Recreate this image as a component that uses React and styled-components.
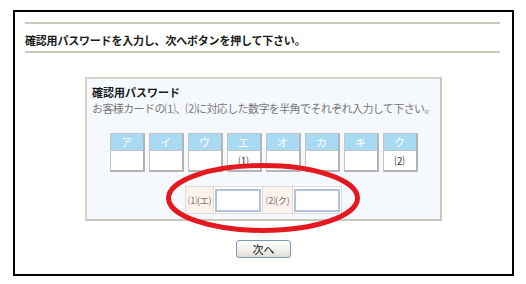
import React from "react";
import styled, { createGlobalStyle } from "styled-components";

const Global = createGlobalStyle`
  html, body { margin: 0; padding: 0; background: #fff; }
  body { font-family: "Noto Sans CJK JP", "Noto Sans", sans-serif; }
  * { box-sizing: border-box; }
`;

const Frame = styled.div`
  margin: 10px 0 0 13px;
  width: 501px;
  height: 266px;
  border: 2px solid #000;
  display: flex;
  flex-direction: column;
`;

const Header = styled.div`
  margin: 10px 12px 0 10px;
  border-top: 2px solid #cdc9bc;
  border-bottom: 2px solid #cdc9bc;
  padding: 9px 0 4px 0;
  font-size: 11px;
  line-height: 14px;
  font-weight: bold;
  color: #1a1a1a;
  letter-spacing: -0.2px;
  height: 31px;
`;

const Box = styled.div`
  margin: 24px auto 0 auto;
  width: 357px;
  border: 2px solid #d6d3ca;
  border-right-color: #c9c6bc;
  border-bottom-color: #c9c6bc;
  background: #f5f9fd;
  padding: 5px 5px 5px 5px;
  display: flex;
  flex-direction: column;
`;

const BoxTitle = styled.div`
  font-size: 11px;
  line-height: 16px;
  font-weight: bold;
  color: #1a1a1a;
`;

const BoxNote = styled.div`
  margin-top: 1px;
  font-size: 11px;
  line-height: 14px;
  color: #777;
  letter-spacing: -0.6px;
  white-space: nowrap;
`;

const Cards = styled.div`
  margin-top: 18px;
  display: grid;
  grid-template-columns: repeat(8, 35px);
  column-gap: 4px;
  justify-content: center;
`;

const Cell = styled.div`
  width: 35px;
  border-top: 1px solid #c4c4c4;
  border-left: 1px solid #c4c4c4;
  border-right: 2px solid #b4b4b4;
  border-bottom: 2px solid #b4b4b4;
  display: flex;
  flex-direction: column;
`;

const CellHead = styled.div`
  height: 17px;
  background: #a8daf4;
  color: #fff;
  font-size: 11px;
  line-height: 17px;
  text-align: center;
  border-bottom: 1px solid #c4c4c4;
`;

const CellBody = styled.div`
  height: 19px;
  background: #fff;
  color: #333;
  font-size: 10px;
  line-height: 20px;
  text-align: center;
`;

const RowWrap = styled.div`
  margin: 14px auto 0 auto;
  position: relative;
`;

const InputRow = styled.div`
  display: flex;
  height: 28px;
  border: 1px solid #dcdcdc;
  background: #fff;
`;

const Label = styled.div`
  width: ${(p) => p.$w}px;
  background: #fdf2ec;
  color: #777;
  font-size: 9.5px;
  letter-spacing: -0.6px;
  display: flex;
  align-items: center;
  justify-content: center;
  border-right: 1px solid #dcdcdc;
  white-space: nowrap;
`;

const InputCell = styled.div`
  width: ${(p) => p.$w}px;
  display: flex;
  align-items: center;
  justify-content: center;
  border-right: ${(p) => (p.$last ? "none" : "1px solid #dcdcdc")};
`;

const Field = styled.input`
  width: 46px;
  height: 23px;
  border: 2px solid #b2c3d9;
  background: #fff;
  padding: 0;
  outline: none;
`;

const Ring = styled.svg`
  position: absolute;
  left: -19px;
  top: -23px;
  width: 194px;
  height: 70px;
  pointer-events: none;
  overflow: visible;
`;

const Button = styled.button`
  margin: 19px auto 0 auto;
  width: 55px;
  height: 18px;
  border: 1px solid #7e9cb9;
  border-radius: 3px;
  background: linear-gradient(#ffffff, #f0efea 60%, #dedcd3);
  font-family: "Noto Sans CJK JP", sans-serif;
  font-size: 11px;
  line-height: 14px;
  color: #111;
  padding: 0;
`;

const kana = ["ア", "イ", "ウ", "エ", "オ", "カ", "キ", "ク"];
const marks = { エ: "⑴", ク: "⑵" };

export default function App() {
  return (
    <>
      <Global />
      <Frame>
        <Header>確認用パスワードを入力し、次へボタンを押して下さい。</Header>
        <Box>
          <BoxTitle>確認用パスワード</BoxTitle>
          <BoxNote>お客様カードの⑴、⑵に対応した数字を半角でそれぞれ入力して下さい。</BoxNote>
          <Cards>
            {kana.map((k) => (
              <Cell key={k}>
                <CellHead>{k}</CellHead>
                <CellBody>{marks[k] || ""}</CellBody>
              </Cell>
            ))}
          </Cards>
          <RowWrap>
            <InputRow>
              <Label $w={28}>⑴(エ)</Label>
              <InputCell $w={49}>
                <Field type="text" />
              </InputCell>
              <Label $w={30}>⑵(ク)</Label>
              <InputCell $w={48} $last>
                <Field type="text" />
              </InputCell>
            </InputRow>
            <Ring viewBox="0 0 194 70">
              <ellipse cx="97" cy="35" rx="94.5" ry="32.5" fill="none" stroke="#e3191f" strokeWidth="5" />
            </Ring>
          </RowWrap>
        </Box>
        <Button>次へ</Button>
      </Frame>
    </>
  );
}
